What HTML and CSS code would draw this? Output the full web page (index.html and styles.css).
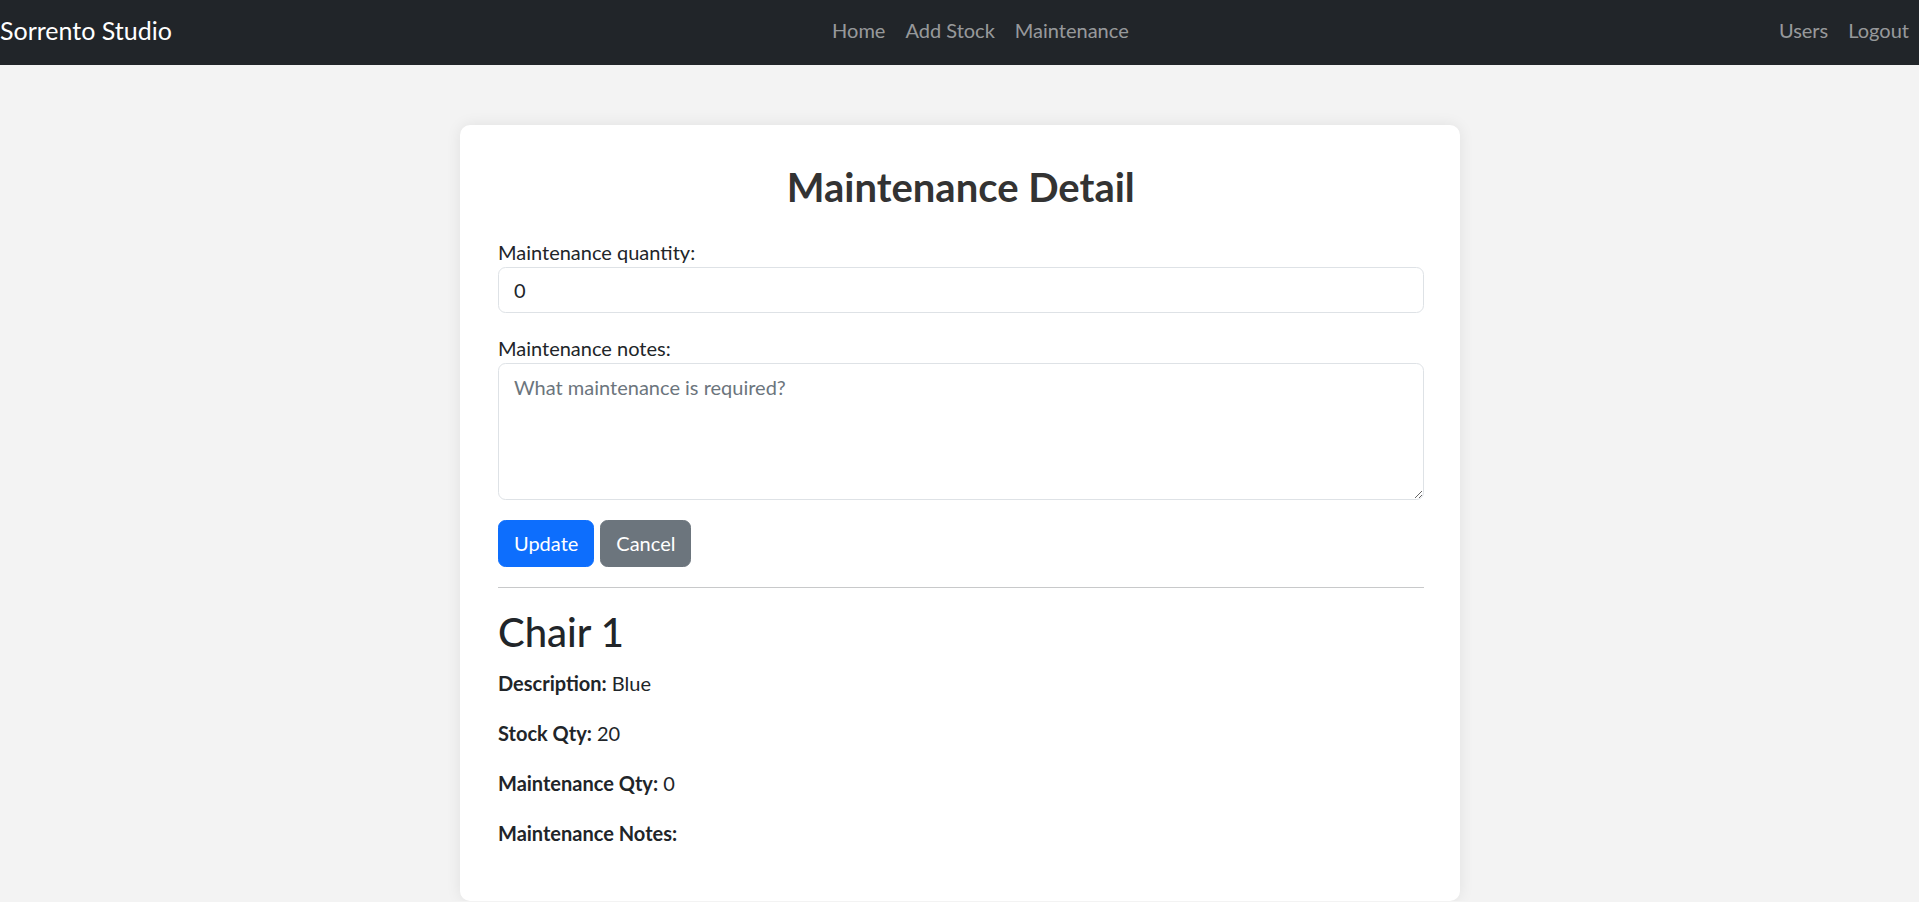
FILE: index.html
```html
<!DOCTYPE html>
<html lang="en">
<head>
<meta charset="utf-8">
<title>Maintenance Detail</title>
<link rel="stylesheet" href="styles.css">
</head>
<body>
<nav class="navbar">
  <a class="brand" href="#">Sorrento Studio</a>
  <ul class="nav nav-center">
    <li><a class="nav-link" href="#">Home</a></li>
    <li><a class="nav-link" href="#">Add Stock</a></li>
    <li><a class="nav-link" href="#">Maintenance</a></li>
  </ul>
  <ul class="nav nav-right">
    <li><a class="nav-link" href="#">Users</a></li>
    <li><a class="nav-link" href="#">Logout</a></li>
  </ul>
</nav>
<main class="main">
  <section class="card">
    <h2 class="title">Maintenance Detail</h2>
    <form class="form">
      <div class="group">
        <label class="label" for="qty">Maintenance quantity:</label>
        <input class="control" id="qty" type="number" value="0">
      </div>
      <div class="group">
        <label class="label" for="notes">Maintenance notes:</label>
        <textarea class="control area" id="notes" placeholder="What maintenance is required?"></textarea>
      </div>
      <div class="actions">
        <button class="btn btn-primary" type="button">Update</button>
        <button class="btn btn-secondary" type="button">Cancel</button>
      </div>
    </form>
    <hr class="divider">
    <h2 class="item-name">Chair 1</h2>
    <p class="detail"><strong>Description:</strong> Blue</p>
    <p class="detail"><strong>Stock Qty:</strong> 20</p>
    <p class="detail"><strong>Maintenance Qty:</strong> 0</p>
    <p class="detail last"><strong>Maintenance Notes:</strong> </p>
  </section>
</main>
</body>
</html>
```
FILE: styles.css
```css
* { box-sizing: border-box; }
html, body { margin: 0; padding: 0; }
body {
  background: #f3f3f3;
  font-family: Lato, "Liberation Sans", sans-serif;
  font-size: 20px;
  line-height: 30px;
  color: #212529;
}
.navbar {
  height: 65px;
  padding-bottom: 5px;
  background: #212529;
  display: flex;
  align-items: center;
}
.brand {
  color: #fff;
  text-decoration: none;
  font-size: 25px;
  line-height: 37px;
  margin-right: 20px;
}
.nav {
  list-style: none;
  margin: 0;
  padding: 0;
  display: flex;
}
.nav-center { margin: 0 auto; }
.nav-link {
  display: block;
  padding: 0 10px;
  color: rgba(255, 255, 255, 0.55);
  text-decoration: none;
  font-size: 20px;
  line-height: 30px;
}
.main { padding-top: 60px; }
.card {
  width: 1000px;
  margin: 0 auto;
  background: #fff;
  border-radius: 10px;
  box-shadow: 0 0 15px rgba(0, 0, 0, 0.08);
  padding: 37.5px 36px 33px 38.5px;
}
.title {
  margin: 0 0 26px;
  text-align: center;
  font-size: 40px;
  line-height: 48px;
  font-weight: 700;
  color: #333;
}
.form { margin: 0; }
.group { margin-bottom: 20px; }
.label { display: block; }
.control {
  display: block;
  width: 100%;
  height: 46px;
  padding: 7px 15px;
  border: 1px solid #dee2e6;
  border-radius: 7.5px;
  font: inherit;
  color: #212529;
  background: #fff;
  -moz-appearance: textfield;
}
.control::-webkit-outer-spin-button,
.control::-webkit-inner-spin-button { -webkit-appearance: none; margin: 0; }
.area {
  height: 137px;
  resize: vertical;
  padding-top: 8px;
}
.area::placeholder { color: #6c757d; opacity: 1; }
.actions { display: flex; gap: 6px; }
.btn {
  font: inherit;
  color: #fff;
  border: 1px solid transparent;
  border-radius: 7.5px;
  padding: 7.5px 15px;
  line-height: 30px;
  cursor: pointer;
}
.btn-primary { background: #0d6efd; border-color: #0d6efd; }
.btn-secondary { background: #6c757d; border-color: #6c757d; }
.divider {
  margin: 20px 0;
  border: 0;
  border-top: 1px solid #c8c9ca;
}
.item-name {
  margin: 0 0 12px;
  font-size: 40px;
  line-height: 48px;
  font-weight: 500;
  color: #212529;
}
.detail { margin: 0 0 20px; }
.detail strong { font-weight: 700; }
.last { margin-bottom: 20px; }
```
